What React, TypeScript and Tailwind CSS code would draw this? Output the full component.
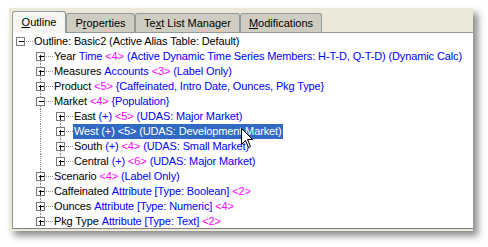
import React from "react"

type Seg = { t: string; c?: "k" | "b" | "m" }
type Row = { level: number; open: boolean; segs: Seg[]; selected?: boolean }

const rows: Row[] = [
  { level: 0, open: true, segs: [{ t: "Outline: Basic2 (Active Alias Table: Default)" }] },
  {
    level: 1,
    open: false,
    segs: [
      { t: "Year" },
      { t: "Time", c: "b" },
      { t: "<4>", c: "m" },
      { t: "(Active Dynamic Time Series Members: H-T-D, Q-T-D) (Dynamic Calc)", c: "b" },
    ],
  },
  { level: 1, open: false, segs: [{ t: "Measures" }, { t: "Accounts", c: "b" }, { t: "<3>", c: "m" }, { t: "(Label Only)", c: "b" }] },
  { level: 1, open: false, segs: [{ t: "Product" }, { t: "<5>", c: "m" }, { t: "{Caffeinated, Intro Date, Ounces, Pkg Type}", c: "b" }] },
  { level: 1, open: true, segs: [{ t: "Market" }, { t: "<4>", c: "m" }, { t: "{Population}", c: "b" }] },
  { level: 2, open: false, segs: [{ t: "East" }, { t: "(+)", c: "b" }, { t: "<5>", c: "m" }, { t: "(UDAS: Major Market)", c: "b" }] },
  { level: 2, open: false, selected: true, segs: [{ t: "West (+) <5> (UDAS: Development Market)" }] },
  { level: 2, open: false, segs: [{ t: "South" }, { t: "(+)", c: "b" }, { t: "<4>", c: "m" }, { t: "(UDAS: Small Market)", c: "b" }] },
  { level: 2, open: false, segs: [{ t: "Central" }, { t: "(+)", c: "b" }, { t: "<6>", c: "m" }, { t: "(UDAS: Major Market)", c: "b" }] },
  { level: 1, open: false, segs: [{ t: "Scenario" }, { t: "<4>", c: "m" }, { t: "(Label Only)", c: "b" }] },
  { level: 1, open: false, segs: [{ t: "Caffeinated" }, { t: "Attribute [Type: Boolean]", c: "b" }, { t: "<2>", c: "m" }] },
  { level: 1, open: false, segs: [{ t: "Ounces" }, { t: "Attribute [Type: Numeric]", c: "b" }, { t: "<4>", c: "m" }] },
  { level: 1, open: false, segs: [{ t: "Pkg Type" }, { t: "Attribute [Type: Text]", c: "b" }, { t: "<2>", c: "m" }] },
]

const ROW_H = 15

// vertical connectors only join siblings of one group
function hasBelow(i: number, level: number) {
  for (let j = i + 1; j < rows.length; j++) {
    if (rows[j].level < level) return false
    if (rows[j].level === level) return true
  }
  return false
}
function hasAbove(i: number, level: number) {
  for (let j = i - 1; j >= 0; j--) {
    if (rows[j].level < level) return false
    if (rows[j].level === level) return true
  }
  return false
}

function Gutter({ i }: { i: number }) {
  const r = rows[i]
  const w = 7 + 20 * r.level + 13
  const mid = 7.5
  const cx = 7 + 20 * r.level + 0.5
  const lines: React.ReactNode[] = []
  for (let l = 1; l < r.level; l++) {
    if (hasBelow(i, l)) {
      const x = 7 + 20 * l + 0.5
      lines.push(<line key={"a" + l} x1={x} y1={0} x2={x} y2={ROW_H} />)
    }
  }
  if (hasAbove(i, r.level)) lines.push(<line key="up" x1={cx} y1={0} x2={cx} y2={mid - 4} />)
  if (hasBelow(i, r.level)) lines.push(<line key="dn" x1={cx} y1={mid + 4} x2={cx} y2={ROW_H} />)
  lines.push(<line key="h" x1={cx + 5} y1={mid} x2={cx + 12} y2={mid} />)
  return (
    <svg width={w} height={ROW_H} className="shrink-0">
      <g stroke="#8c8c8c" strokeWidth="1" strokeDasharray="1 1" shapeRendering="crispEdges">
        {lines}
      </g>
      <rect x={cx - 4} y={mid - 4} width={8} height={8} fill="white" stroke="#7a7a7a" shapeRendering="crispEdges" />
      <line x1={cx - 2} y1={mid} x2={cx + 3} y2={mid} stroke="black" shapeRendering="crispEdges" />
      {!r.open && <line x1={cx} y1={mid - 2} x2={cx} y2={mid + 3} stroke="black" shapeRendering="crispEdges" />}
    </svg>
  )
}

const color = { k: "text-black", b: "text-[#0000ff]", m: "text-[#ff00ff]" }

function Tab({ label, u, w, active }: { label: string; u: number; w: string; active?: boolean }) {
  return (
    <div
      className={
        w +
        " flex items-center justify-center rounded-t-[3px] border border-b-0 border-[#919b9c] text-[11px] text-black " +
        (active ? "h-[22px] bg-[#f7f6f0] relative z-10 -mb-px pb-px" : "h-[19px] bg-[#cfcdc1]")
      }
    >
      <span>
        {label.slice(0, u)}
        <span className="underline">{label[u]}</span>
        {label.slice(u + 1)}
      </span>
    </div>
  )
}

function Cursor() {
  return (
    <svg width="13" height="21" viewBox="0 0 13 21" className="absolute left-[241px] top-[128px]">
      <path d="M0.5 0.5 L0.5 16.5 L4.5 12.5 L7.5 19.5 L9.5 18.5 L6.5 11.5 L11.5 11.5 Z" fill="white" stroke="black" strokeLinejoin="miter" />
    </svg>
  )
}

export default function App() {
  return (
    <div className="w-[488px] h-[247px] bg-white pt-[8px] pl-[9px] relative" style={{ fontFamily: '"Liberation Sans", Arial, sans-serif' }}>
      <div className="w-[464px] h-[223px] bg-[#ece9d8] pl-[3px] pt-[3px] flex flex-col shadow-[5px_5px_7px_rgba(0,0,0,0.45)]">
        <div className="flex items-end h-[21px]">
          <Tab label="Outline" u={0} w="w-[54px]" active />
          <Tab label="Properties" u={1} w="w-[69px]" />
          <Tab label="Text List Manager" u={2} w="w-[105px]" />
          <Tab label="Modifications" u={0} w="w-[82px]" />
        </div>
        <div className="flex-1 bg-white border-t border-l border-[#919b9c] border-b-[#808080] border-b mb-[2px] pt-[1px] overflow-hidden text-[11px] leading-[15px] tracking-[-0.12px]">
          {rows.map((r, i) => (
            <div key={i} className="flex h-[15px] items-center whitespace-nowrap">
              <Gutter i={i} />
              <div className={"flex gap-[3px] px-px " + (r.selected ? "bg-[#316ac5] text-white" : "")}>
                {r.segs.map((s, k) => (
                  <span key={k} className={r.selected ? "" : color[s.c ?? "k"]}>
                    {s.t}
                  </span>
                ))}
              </div>
            </div>
          ))}
        </div>
      </div>
      <Cursor />
    </div>
  )
}
